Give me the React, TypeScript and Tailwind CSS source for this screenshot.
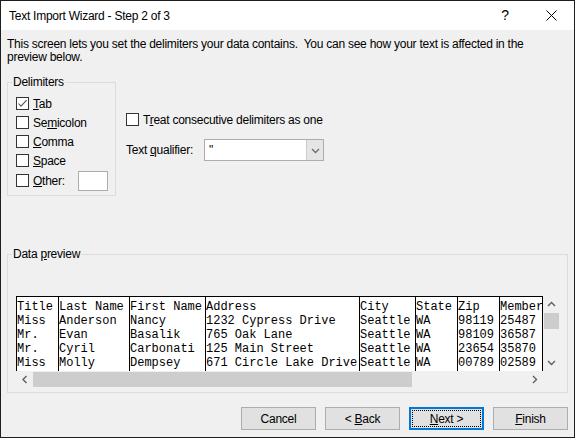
import React from "react";

function Check({ checked }: { checked?: boolean }) {
  return (
    <span className="w-[13px] h-[13px] border border-[#333333] bg-white flex items-center justify-center shrink-0">
      {checked && (
        <svg width="11" height="11" viewBox="0 0 11 11">
          <polyline points="1.5,5.5 4,8.2 9.6,2.2" fill="none" stroke="#555555" strokeWidth="1.1" />
        </svg>
      )}
    </span>
  );
}

function Chevron({ dir, color = "#606060" }: { dir: "up" | "down" | "left" | "right"; color?: string }) {
  const pts =
    dir === "up"
      ? "1,5 4.5,1.5 8,5"
      : dir === "down"
      ? "1,2 4.5,5.5 8,2"
      : dir === "left"
      ? "5.5,1 2,4.5 5.5,8"
      : "2,1 5.5,4.5 2,8";
  const w = dir === "up" || dir === "down" ? 9 : 7;
  const h = dir === "up" || dir === "down" ? 7 : 9;
  return (
    <svg width={w} height={h} viewBox={`0 0 ${w} ${h}`}>
      <polyline points={pts} fill="none" stroke={color} strokeWidth="1.4" />
    </svg>
  );
}

const cols: { cls: string; cells: string[] }[] = [
  { cls: "w-[42px]", cells: ["Title", "Miss", "Mr.", "Mr.", "Miss"] },
  { cls: "w-[71px]", cells: ["Last Name", "Anderson", "Evan", "Cyril", "Molly"] },
  { cls: "w-[76px]", cells: ["First Name", "Nancy", "Basalik", "Carbonati", "Dempsey"] },
  {
    cls: "w-[154px]",
    cells: ["Address", "1232 Cypress Drive", "765 Oak Lane", "125 Main Street", "671 Circle Lake Drive"],
  },
  { cls: "w-[56px]", cells: ["City", "Seattle", "Seattle", "Seattle", "Seattle"] },
  { cls: "w-[42px]", cells: ["State", "WA", "WA", "WA", "WA"] },
  { cls: "w-[42px]", cells: ["Zip", "98119", "98109", "23654", "00789"] },
  { cls: "w-[43px]", cells: ["Member", "25487", "36587", "35870", "02589"] },
];

function Btn({ children, focused }: { children: React.ReactNode; focused?: boolean }) {
  if (focused) {
    return (
      <div className="w-[75px] h-[23px] border-2 border-[#0078d7] bg-[#e1e1e1] p-[1px] flex">
        <div className="flex-1 border border-dotted border-black flex items-center justify-center whitespace-pre">
          {children}
        </div>
      </div>
    );
  }
  return (
    <div className="w-[75px] h-[23px] border border-[#adadad] bg-[#e1e1e1] flex items-center justify-center whitespace-pre">
      {children}
    </div>
  );
}

export default function App() {
  const delims = [
    { pre: "", u: "T", post: "ab", checked: true },
    { pre: "Se", u: "m", post: "icolon" },
    { pre: "", u: "C", post: "omma" },
    { pre: "", u: "S", post: "pace" },
  ];
  return (
    <div className="w-[575px] h-[438px] border border-[#1e1e1e] bg-[#f0f0f0] flex flex-col overflow-hidden text-[12px] tracking-[-0.25px] text-black font-['Liberation_Sans',Arial,sans-serif]">
      {/* title bar */}
      <div className="h-[29px] bg-white flex items-center shrink-0">
        <span className="pl-[8px] flex-1 whitespace-nowrap">Text Import Wizard - Step 2 of 3</span>
        <div className="w-[46px] h-full flex items-center justify-center text-[14px]">?</div>
        <div className="w-[46px] h-full flex items-center justify-center">
          <svg width="11" height="11" viewBox="0 0 11 11">
            <path d="M0.5 0.5 L10.5 10.5 M10.5 0.5 L0.5 10.5" stroke="#000" strokeWidth="1" />
          </svg>
        </div>
      </div>

      <div className="px-[6px] pt-[8px] leading-[13px] whitespace-nowrap">
        This screen lets you set the delimiters your data contains.&nbsp; You can see how your text is affected in the
        <br />
        preview below.
      </div>

      <div className="px-[6px] mt-[12px] flex">
        <fieldset className="w-[109px] border border-[#dcdcdc] pl-[8px] pt-[5px] pb-[4px]">
          <legend className="-ml-[4px] px-[1px] leading-[13px]">Delimiters</legend>
          {delims.map((d, i) => (
            <div key={i} className="h-[19px] flex items-center gap-[4px]">
              <Check checked={d.checked} />
              <span>
                {d.pre}
                <span className="underline">{d.u}</span>
                {d.post}
              </span>
            </div>
          ))}
          <div className="h-[21px] flex items-center">
            <Check />
            <span className="ml-[4px] w-[45px]">
              <span className="underline">O</span>ther:
            </span>
            <div className="w-[30px] h-[20px] border border-[#adadad] bg-white" />
          </div>
        </fieldset>

        <div className="ml-[10px] pt-[34px] flex flex-col">
          <div className="h-[19px] flex items-center gap-[4px]">
            <Check />
            <span>
              T<span className="underline">r</span>eat consecutive delimiters as one
            </span>
          </div>
          <div className="mt-[10px] flex items-center">
            <span className="w-[78px]">
              Text <span className="underline">q</span>ualifier:
            </span>
            <div className="w-[120px] h-[22px] border border-[#adadad] bg-white flex">
              <div className="flex-1 pl-[4px] flex items-center">"</div>
              <div className="w-[17px] bg-[#e5e5e5] border-l border-[#cccccc] flex items-center justify-center">
                <Chevron dir="down" color="#707070" />
              </div>
            </div>
          </div>
        </div>
      </div>

      <div className="px-[6px] mt-[52px]">
        <fieldset className="border border-[#dcdcdc] pl-[8px] pt-[35px] pb-[4px]">
          <legend className="-ml-[4px] px-[1px] leading-[13px]">
            Data <span className="underline">p</span>review
          </legend>
          <div className="w-[544px] flex flex-col">
            <div className="flex h-[75px]">
              <div className="w-[527px] h-[75px] bg-white border-l border-t border-black flex overflow-hidden font-['Liberation_Mono','Courier_New',monospace] tracking-normal text-[12px] leading-[14px]">
                {cols.map((c, i) => (
                  <div key={i} className={`${c.cls} shrink-0 border-r border-black pt-[3px] overflow-hidden`}>
                    {c.cells.map((t, j) => (
                      <div key={j} className="h-[14px] whitespace-pre">
                        {t}
                      </div>
                    ))}
                  </div>
                ))}
              </div>
              <div className="w-[17px] h-[75px] flex flex-col">
                <div className="h-[17px] flex items-center justify-center">
                  <Chevron dir="up" />
                </div>
                <div className="h-[16px] mx-[1px] bg-[#cdcdcd]" />
                <div className="flex-1" />
                <div className="h-[17px] flex items-center justify-center">
                  <Chevron dir="down" />
                </div>
              </div>
            </div>
            <div className="flex h-[17px]">
              <div className="w-[527px] flex">
                <div className="w-[17px] flex items-center justify-center">
                  <Chevron dir="left" />
                </div>
                <div className="w-[379px] my-[1px] bg-[#cdcdcd]" />
                <div className="flex-1" />
                <div className="w-[17px] flex items-center justify-center">
                  <Chevron dir="right" />
                </div>
              </div>
              <div className="w-[17px]" />
            </div>
          </div>
        </fieldset>
      </div>

      <div className="mt-[14px] pr-[6px] flex justify-end gap-[9px]">
        <Btn>Cancel</Btn>
        <Btn>
          {"< "}
          <span className="underline">B</span>
          {"ack"}
        </Btn>
        <Btn focused>
          <span className="underline">N</span>
          {"ext >"}
        </Btn>
        <Btn>
          <span className="underline">F</span>
          {"inish"}
        </Btn>
      </div>
    </div>
  );
}
